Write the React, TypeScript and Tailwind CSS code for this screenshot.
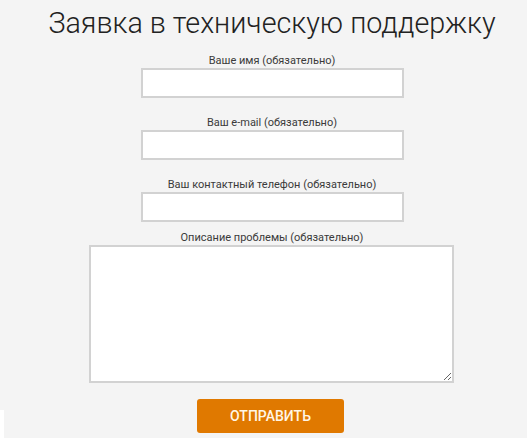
import React from "react";

const font = { fontFamily: "Roboto, 'Noto Sans', sans-serif" };

function Field({ label, mt }: { label: string; mt: string }) {
  return (
    <div className={`flex flex-col items-center ${mt}`}>
      <label className="text-[11px] leading-[15px] text-[#3a3a3a]">{label}</label>
      <input
        type="text"
        className="h-[30px] w-[263px] border-2 border-[#d2d2d2] bg-white outline-none"
      />
    </div>
  );
}

export default function App() {
  return (
    <div
      className="relative h-[438px] w-[527px] overflow-hidden bg-[#f4f4f4]"
      style={font}
    >
      <div className="flex flex-col items-center pl-[17px]">
        <h1 className="mt-[9px] whitespace-nowrap text-[28.7px] font-light leading-[28px] text-[#222222]">
          Заявка в техническую поддержку
        </h1>
        <Field label="Ваше имя (обязательно)" mt="mt-[16px]" />
        <Field label="Ваш e-mail (обязательно)" mt="mt-[17px]" />
        <Field label="Ваш контактный телефон (обязательно)" mt="mt-[17px]" />
        <div className="mt-[8px] flex flex-col items-center">
          <label className="text-[11px] leading-[15px] text-[#3a3a3a]">
            Описание проблемы (обязательно)
          </label>
          <textarea className="h-[138px] w-[365px] mr-[1px] border-2 border-[#d2d2d2] bg-white outline-none" />
        </div>
        <button
          type="button"
          className="mt-[16px] mr-[3px] h-[34px] w-[147px] rounded-[3px] bg-[#e07900] text-[14px] font-medium uppercase text-[#fff6e6]"
        >
          Отправить
        </button>
      </div>
      <div className="absolute bottom-0 left-0 h-[28px] w-[4px] bg-white" />
    </div>
  );
}
